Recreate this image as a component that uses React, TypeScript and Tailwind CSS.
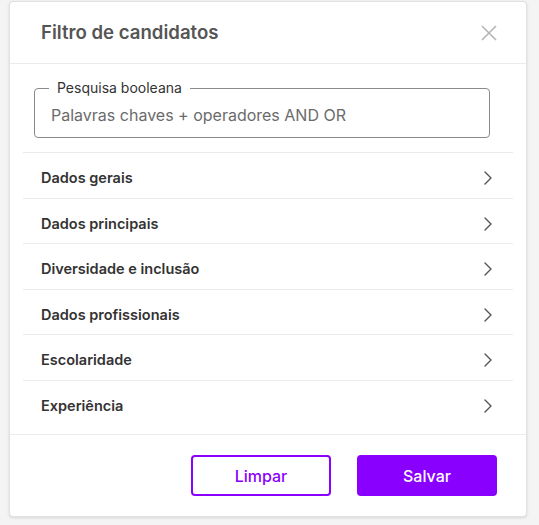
import React from 'react';

const SECTIONS = [
  'Dados gerais',
  'Dados principais',
  'Diversidade e inclusão',
  'Dados profissionais',
  'Escolaridade',
  'Experiência',
];

const Chevron: React.FC = () => (
  <svg width="10" height="16" viewBox="0 0 10 16" fill="none" className="text-[#555]">
    <path d="M2 2l6 6-6 6" stroke="currentColor" strokeWidth="1.4" strokeLinecap="round" strokeLinejoin="round" />
  </svg>
);

const App: React.FC = () => {
  return (
    <div className="w-[539px] h-[525px] bg-[#f4f4f4] pl-[9px] pt-[1px] font-['Inter',sans-serif]">
      <div className="w-[518px] h-[516px] bg-white rounded-[4px] border border-[#e2e2e2] shadow-[0_1px_3px_rgba(0,0,0,0.12)] flex flex-col">
        {/* header */}
        <div className="h-[62px] flex items-center justify-between pl-[31px] pr-[29px] border-b border-[#ebebeb] shrink-0">
          <h2 className="text-[18.6px] font-semibold text-[#555] leading-none">Filtro de candidatos</h2>
          <svg width="16" height="16" viewBox="0 0 16 16" fill="none">
            <path d="M1 1l14 14M15 1L1 15" stroke="#b5b5b5" strokeWidth="1.6" />
          </svg>
        </div>

        {/* body */}
        <div className="flex-1 px-[13px]">
          <div className="pl-[11px] pr-[23px] pt-[16px] pb-[14px] border-b border-[#e8ecec]">
            <fieldset className="border border-[#8a8a8a] rounded-[4px] h-[58px] px-[16px]">
              <legend className="px-[8px] -ml-[2px] text-[14px] text-[#333] leading-[16px]">Pesquisa booleana</legend>
              <div className="text-[16px] text-[#6b6b6b] leading-[20px] pt-[9px]">Palavras chaves + operadores AND OR</div>
            </fieldset>
          </div>
          {SECTIONS.map((s, i) => (
            <div
              key={s}
              className={`h-[45.5px] flex items-center justify-between pt-[6px] pl-[18px] pr-[20px] ${i < SECTIONS.length - 1 ? 'border-b border-[#e8ecec]' : ''}`}
            >
              <span className="text-[14.5px] font-semibold text-[#333]">{s}</span>
              <Chevron />
            </div>
          ))}
        </div>

        {/* footer */}
        <div className="h-[82px] border-t border-[#ebebeb] flex items-center justify-end gap-[26px] pr-[29px] shrink-0">
          <button className="w-[140px] h-[41px] rounded-[4px] border-2 border-[#8a00ff] text-[#8a00ff] text-[16px] font-medium">
            Limpar
          </button>
          <button className="w-[140px] h-[41px] rounded-[4px] bg-[#8a00ff] text-white text-[16px] font-medium">
            Salvar
          </button>
        </div>
      </div>
    </div>
  );
};

export default App;
